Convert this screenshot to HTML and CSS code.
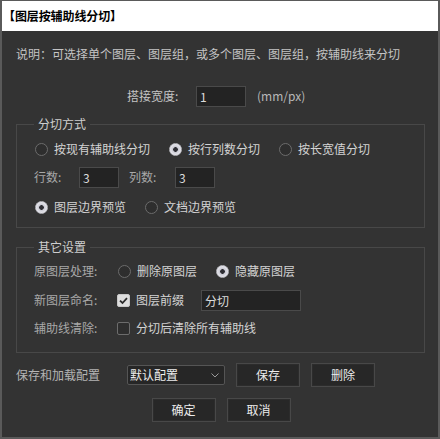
FILE: index.html
```html
<!DOCTYPE html>
<html lang="zh-CN">
<head>
<meta charset="utf-8">
<title>图层按辅助线分切</title>
<link rel="stylesheet" href="styles.css">
</head>
<body>
<div class="window">
  <div class="titlebar">【图层按辅助线分切】</div>
  <div class="content">
    <div class="desc">说明：可选择单个图层、图层组，或多个图层、图层组，按辅助线来分切</div>
    <div class="row overlap">
      <span class="lbl-overlap">搭接宽度:</span>
      <input class="field field-w50" type="text" value="1" readonly>
      <span class="unit">(mm/px)</span>
    </div>

    <fieldset class="group group1">
      <legend>分切方式</legend>
      <div class="row r1">
        <span class="opt"><span class="radio"></span>按现有辅助线分切</span>
        <span class="opt"><span class="radio on"></span>按行列数分切</span>
        <span class="opt"><span class="radio"></span>按长宽值分切</span>
      </div>
      <div class="row r2">
        <span class="lbl lbl-rows">行数:</span>
        <input class="field field-w40" type="text" value="3" readonly>
        <span class="lbl lbl-cols">列数:</span>
        <input class="field field-w40" type="text" value="3" readonly>
      </div>
      <div class="row r3">
        <span class="opt"><span class="radio on"></span>图层边界预览</span>
        <span class="opt"><span class="radio"></span>文档边界预览</span>
      </div>
    </fieldset>

    <fieldset class="group group2">
      <legend>其它设置</legend>
      <div class="row ra">
        <span class="lbl lbl-wide">原图层处理:</span>
        <span class="opt"><span class="radio"></span>删除原图层</span>
        <span class="opt"><span class="radio on"></span>隐藏原图层</span>
      </div>
      <div class="row rb">
        <span class="lbl lbl-wide">新图层命名:</span>
        <span class="opt"><span class="check on"><svg viewBox="0 0 13 13" width="13" height="13"><path d="M3 6.6 L5.5 9 L10 4.2" fill="none" stroke="#2b2b2b" stroke-width="1.8"/></svg></span>图层前缀</span>
        <input class="field field-w100 prefix" type="text" value="分切" readonly>
      </div>
      <div class="row rc">
        <span class="lbl lbl-wide">辅助线清除:</span>
        <span class="opt"><span class="check"></span>分切后清除所有辅助线</span>
      </div>
    </fieldset>

    <div class="row config">
      <span class="lbl-config">保存和加载配置</span>
      <div class="select">
        <span>默认配置</span>
        <svg class="chev" viewBox="0 0 8 5" width="8" height="5"><path d="M0.5 0.5 L4 4 L7.5 0.5" fill="none" stroke="#9a9a9a" stroke-width="1"/></svg>
      </div>
      <button class="btn">保存</button>
      <button class="btn">删除</button>
    </div>
    <div class="row actions">
      <button class="btn">确定</button>
      <button class="btn">取消</button>
    </div>
  </div>
</div>
</body>
</html>
```

FILE: styles.css
```css
html, body {
  margin: 0;
  padding: 0;
  background: #333333;
}
body {
  font-family: "Noto Sans CJK SC", "Noto Sans", "Liberation Sans", sans-serif;
  font-size: 12px;
  line-height: 16px;
  color: #c8c8c8;
}
.window {
  width: 440px;
  height: 439px;
  box-sizing: border-box;
  border: 2px solid #5a5a5a;
  border-top-width: 1px;
  background: #333333;
  display: flex;
  flex-direction: column;
}
.titlebar {
  height: 30px;
  flex: none;
  background: #ffffff;
  color: #000000;
  font-weight: bold;
  font-size: 12px;
  display: flex;
  align-items: center;
  padding-left: 1px;
  letter-spacing: -0.1px;
}
.content {
  padding: 0 13px 0 14px;
}
.desc {
  margin-top: 13px;
  height: 20px;
  line-height: 20px;
  color: #c4c4c4;
  white-space: nowrap;
}
.row {
  display: flex;
  align-items: center;
  white-space: nowrap;
}
.overlap {
  margin-top: 21px;
  height: 22px;
  padding-left: 111px;
}
.lbl-overlap {
  width: 69px;
  color: #c4c4c4;
}
.unit {
  margin-left: 11px;
  color: #b8b8b8;
}
.field {
  box-sizing: border-box;
  height: 21px;
  background: #232323;
  border: 1px solid #4a4a4a;
  color: #dcdcdc;
  font-family: inherit;
  font-size: 12px;
  padding: 0 3px;
  margin: 0;
  outline: none;
}
.field-w50 { width: 50px; }
.field-w40 { width: 40px; }
.field-w100 { width: 100px; }

.group {
  margin: 0;
  padding: 0 0 0 17px;
  border: 1px solid #484848;
  min-width: 0;
}
.group legend {
  padding: 0 4px;
  line-height: 16px;
  color: #cfcfcf;
}
.group1 { margin-top: 9px; padding-bottom: 10px; }
.group2 { margin-top: 11px; padding-bottom: 14px; }

.r1 { margin-top: 7px; height: 20px; gap: 18px; }
.r2 { margin-top: 7px; height: 22px; }
.r3 { margin-top: 9px; height: 20px; gap: 18px; }
.ra { margin-top: 6px; height: 20px; }
.rb { margin-top: 8px; height: 22px; }
.rc { margin-top: 7px; height: 20px; }

.opt {
  display: inline-flex;
  align-items: center;
  color: #d4d4d4;
}
.ra .opt + .opt { margin-left: 18px; }

.radio {
  width: 13px;
  height: 13px;
  box-sizing: border-box;
  border-radius: 50%;
  border: 1px solid #6c6c6c;
  background: #2e2e2e;
  margin: 0 6px 0 1px;
  flex: none;
}
.radio.on {
  border-color: #b8b8be;
  background: radial-gradient(circle, #2e2e34 0, #2e2e34 2px, #c9c9d2 2.6px, #ececf2 6px);
}
.check {
  width: 13px;
  height: 13px;
  box-sizing: border-box;
  border-radius: 2px;
  border: 1px solid #6c6c6c;
  background: #2e2e2e;
  margin-right: 6px;
  flex: none;
  display: flex;
}
.check.on {
  border-color: #c8c8c8;
  background: #dedede;
}
.check.on svg { margin: -1px; }

.lbl { color: #a8a8a8; }
.lbl-rows { width: 45px; }
.lbl-cols { width: 46px; margin-left: 10px; }
.lbl-wide { width: 83px; }
.prefix { margin-left: 17px; width: 100px; }

.config {
  margin-top: 10px;
  height: 24px;
  margin-left: 0;
}
.lbl-config {
  width: 111px;
  color: #b4b4b4;
}
.select {
  box-sizing: border-box;
  width: 98px;
  height: 20px;
  border: 1px solid #555555;
  border-radius: 2px;
  background: #262626;
  color: #ededed;
  display: flex;
  align-items: center;
  justify-content: space-between;
  padding: 0 5px 0 2px;
  margin-right: 11px;
}
.chev { margin-top: 1px; }
.btn {
  box-sizing: border-box;
  width: 64px;
  height: 24px;
  margin: 0;
  padding: 0;
  background: #272727;
  border: 1px solid #484848;
  box-shadow: inset 0 0 0 1px #2c2c2c;
  color: #ececec;
  font-family: inherit;
  font-size: 12px;
  line-height: 16px;
}
.config .btn + .btn { margin-left: 11px; }
.actions {
  margin-top: 11px;
  height: 24px;
  justify-content: center;
  gap: 11px;
  padding-left: 1px;
}
```
